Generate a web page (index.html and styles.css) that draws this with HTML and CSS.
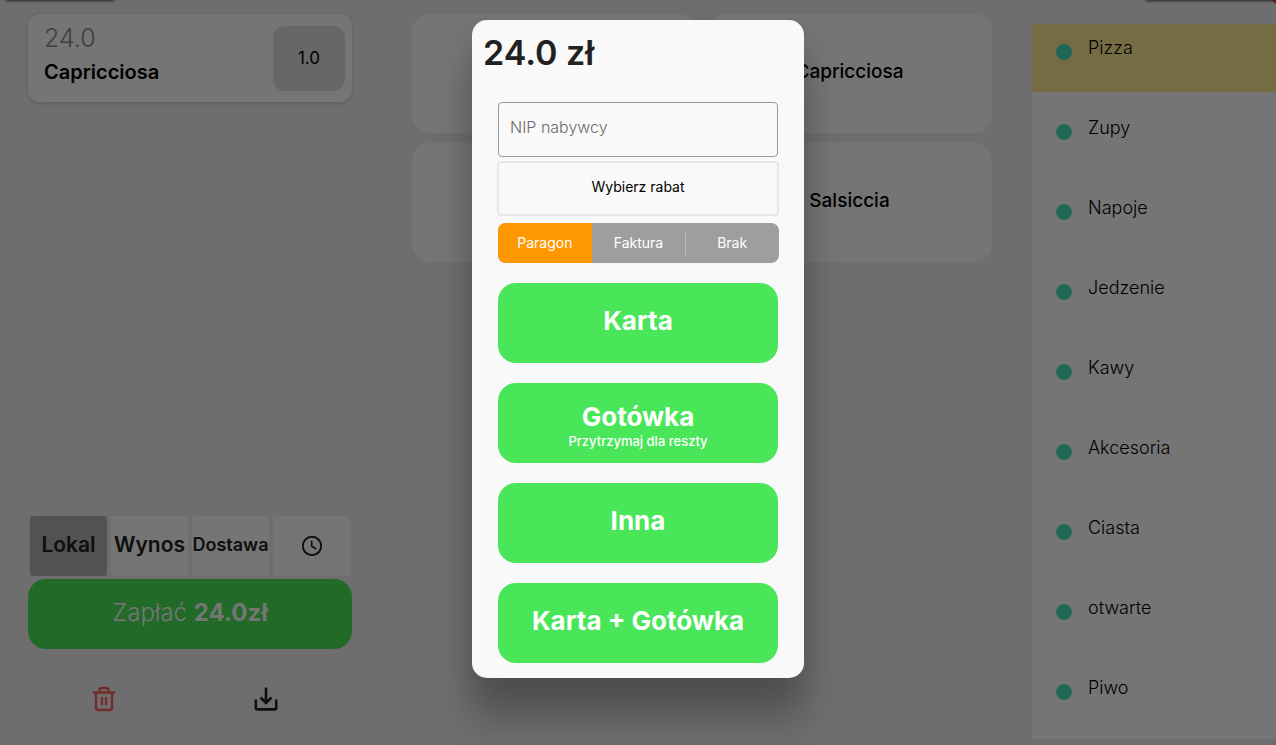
FILE: index.html
```html
<!DOCTYPE html>
<html lang="pl">
<head>
<meta charset="utf-8">
<title>Kasa</title>
<link rel="stylesheet" href="styles.css">
</head>
<body>
<div class="app">
  <section class="order">
    <article class="order-item">
      <div class="order-info">
        <span class="order-price">24.0</span>
        <span class="order-name">Capricciosa</span>
      </div>
      <button class="quantity" type="button">1.0</button>
    </article>
    <div class="order-actions">
      <div class="modes">
        <button class="mode mode-active" type="button">Lokal</button>
        <button class="mode" type="button">Wynos</button>
        <button class="mode mode-small" type="button">Dostawa</button>
        <button class="mode" type="button" aria-label="Czas">
          <svg width="22" height="22" viewBox="0 0 22 22" fill="none" stroke="currentColor" stroke-width="1.9"><circle cx="11" cy="11" r="9.2"/><path d="M10.7 5.8v5.500l4.600 2.800" stroke-width="1.6"/></svg>
        </button>
      </div>
      <button class="pay" type="button">Zapłać <strong>24.0zł</strong></button>
      <div class="tools">
        <button class="tool tool-delete" type="button" aria-label="Usuń">
          <svg width="24" height="26" viewBox="0 0 24 26" fill="none" stroke="currentColor" stroke-width="2.300"><path d="M1 6.500h22M4 6.500v15a2.500 2.500 0 0 0 2.500 2.500h11a2.500 2.500 0 0 0 2.500-2.500v-15M7.500 6V3.800a1.800 1.800 0 0 1 1.800-1.800h5.400a1.800 1.800 0 0 1 1.800 1.800V6M10 11v8M14 11v8"/></svg>
        </button>
        <button class="tool" type="button" aria-label="Zapisz">
          <svg width="24" height="24" viewBox="0 0 24 24" fill="none" stroke="currentColor" stroke-width="2.600"><path d="M1.800 12.500v8.300a1.600 1.600 0 0 0 1.600 1.600h17.200a1.600 1.600 0 0 0 1.600-1.600v-8.300M12 .5v15.500M6.500 10.500 12 15.900l5.500-5.400"/></svg>
        </button>
      </div>
    </div>
  </section>
  <main class="products">
    <button class="product" type="button"></button>
    <button class="product" type="button">Capricciosa</button>
    <button class="product" type="button"></button>
    <button class="product" type="button">Salsiccia</button>
  </main>
  <nav class="categories">
    <ul class="category-list">
      <li class="category category-active"><span class="dot"></span>Pizza</li>
      <li class="category"><span class="dot"></span>Zupy</li>
      <li class="category"><span class="dot"></span>Napoje</li>
      <li class="category"><span class="dot"></span>Jedzenie</li>
      <li class="category"><span class="dot"></span>Kawy</li>
      <li class="category"><span class="dot"></span>Akcesoria</li>
      <li class="category"><span class="dot"></span>Ciasta</li>
      <li class="category"><span class="dot"></span>otwarte</li>
      <li class="category"><span class="dot"></span>Piwo</li>
    </ul>
  </nav>
  <div class="edge edge-left"></div>
  <div class="edge edge-right"></div>
  <svg class="corner" width="4" height="4" viewBox="0 0 4 4"><path d="M0 0h4v4z" fill="#d32f2f"/></svg>
</div>
<div class="backdrop">
  <form class="dialog" role="dialog" aria-labelledby="total">
    <h1 class="total" id="total">24.0 zł</h1>
    <div class="dialog-body">
      <input class="tax-id" type="text" placeholder="NIP nabywcy" aria-label="NIP nabywcy">
      <button class="discount" type="button">Wybierz rabat</button>
      <div class="documents">
        <button class="document document-active" type="button">Paragon</button>
        <button class="document" type="button">Faktura</button>
        <button class="document document-split" type="button">Brak</button>
      </div>
      <div class="methods">
        <button class="method" type="button">Karta</button>
        <button class="method method-hinted" type="button">Gotówka<small class="hint">Przytrzymaj dla reszty</small></button>
        <button class="method" type="button">Inna</button>
        <button class="method" type="button">Karta + Gotówka</button>
      </div>
    </div>
  </form>
</div>
</body>
</html>
```
FILE: styles.css
```css
* { box-sizing: border-box; }
body {
  margin: 0;
  overflow: hidden;
  background: #f0f0f0;
  color: #000;
  font-family: Inter, "Noto Sans", sans-serif;
}
button, input { margin: 0; padding: 0; border: 0; font: inherit; color: inherit; }
svg { display: block; }

.app {
  position: relative;
  display: grid;
  grid-template-columns: 324px 1fr 244px;
  min-height: 100vh;
  padding-left: 28px;
}

.order {
  display: flex;
  flex-direction: column;
  justify-content: space-between;
  padding: 14px 0 6px;
}
.order-item {
  display: flex;
  align-items: center;
  justify-content: space-between;
  height: 88px;
  padding: 0 7px 0 16px;
  border-radius: 12px;
  background: #fff;
  box-shadow: 0 1px 4px rgba(0, 0, 0, .18);
}
.order-info { display: flex; flex-direction: column; gap: 2px; height: 72px; }
.order-price { font-size: 25px; line-height: 32px; font-weight: 300; color: #8c8c8c; }
.order-name { font-size: 20px; line-height: 32px; font-weight: 600; }
.quantity {
  width: 72px;
  height: 65px;
  border-radius: 12px;
  background: #e0e0e0;
  font-size: 17px;
}

.order-actions { display: flex; flex-direction: column; }
.modes { display: grid; grid-template-columns: repeat(4, 1fr); gap: 4px; padding: 0 2px 3px; }
.mode {
  display: flex;
  align-items: center;
  justify-content: center;
  height: 60px;
  padding-bottom: 4px;
  border-radius: 3px;
  background: #fff;
  color: #212121;
  font-size: 21px;
  font-weight: 600;
}
.mode:last-child { padding-bottom: 0; }
.mode-active { background: #b2b2b2; }
.mode-small { font-size: 18px; }
.pay {
  height: 70px;
  padding-bottom: 4px;
  border-radius: 18px;
  background: #48e658;
  color: #fff;
  font-size: 24px;
  font-weight: 300;
}
.pay strong { font-weight: 700; }
.tools { display: grid; grid-template-columns: 1fr 1fr; gap: 10px; padding: 10px 10px 0 0; }
.tool {
  display: flex;
  align-items: center;
  justify-content: center;
  height: 80px;
  border: 1px solid #e7e7e7;
  border-radius: 12px;
  background: transparent;
  color: #212121;
}
.tool-delete { color: #ff5c5c; }

.products {
  display: grid;
  grid-template-columns: 1fr 1fr;
  grid-auto-rows: 119px;
  align-content: start;
  gap: 10px;
  padding: 14px 40px 0 60px;
}
.product {
  padding-bottom: 4px;
  border-radius: 18px;
  background: #fff;
  font-size: 19px;
  font-weight: 500;
}

.categories { padding: 24px 0 6px; }
.category-list { height: 100%; margin: 0; padding: 0; background: #fff; list-style: none; }
.category {
  display: flex;
  align-items: flex-end;
  gap: 16px;
  height: 80px;
  padding: 0 24px 32px;
  font-size: 18px;
  line-height: 24px;
  font-weight: 300;
}
.category-active { height: 68px; background: #ffeb94; }
.dot { width: 16px; height: 16px; border-radius: 50%; background: #46e0c0; }

/* Lower edges of the scrolled toolbar */
.edge { position: absolute; top: -4px; height: 4px; box-shadow: 0 1px 3px rgba(0, 0, 0, .7); }
.edge-left { left: 6px; width: 108px; }
.edge-right { right: 0; width: 130px; }
.corner { position: absolute; top: 0; right: 0; }

.backdrop {
  position: absolute;
  inset: 0;
  display: flex;
  align-items: flex-start;
  justify-content: center;
  padding-top: 20px;
  overflow: hidden;
  background: rgba(0, 0, 0, .54);
}
.dialog {
  width: 332px;
  border-radius: 15px;
  background: #f9f9f9;
  box-shadow: 0 40px 36px rgba(0, 0, 0, .25), 0 8px 28px rgba(0, 0, 0, .08);
}
.total {
  margin: 0;
  padding: 8px 11px 24px;
  color: #212121;
  font-size: 34px;
  line-height: 50px;
  font-weight: 600;
}
.dialog-body { display: flex; flex-direction: column; padding: 0 25px 15px; }
.tax-id {
  height: 55px;
  margin: 0 1px 4px;
  padding: 0 11px 6px;
  border: 1px solid #999;
  border-radius: 4px;
  background: transparent;
  font-size: 16px;
  font-weight: 300;
}
.tax-id::placeholder { color: #6b6b6b; opacity: 1; }
.discount {
  height: 55px;
  padding-bottom: 4px;
  border: 2px solid #e8e8e8;
  border-radius: 4px;
  background: transparent;
  font-size: 14px;
}
.documents {
  display: grid;
  grid-template-columns: repeat(3, 1fr);
  height: 40px;
  margin: 7px 0 20px 1px;
  overflow: hidden;
  border-radius: 8px;
  background: #9e9e9e;
  color: #fff;
  font-size: 14px;
}
.document { padding-bottom: 2px; background: transparent; }
.document-active { background: #ff9800; }
.document-split {
  background: linear-gradient(#bdbdbd, #bdbdbd) left center / 1px 24px no-repeat;
}
.methods { display: flex; flex-direction: column; gap: 20px; padding: 0 1px; }
.method {
  display: flex;
  flex-direction: column;
  align-items: center;
  justify-content: center;
  height: 80px;
  padding-bottom: 4px;
  border-radius: 18px;
  background: #48e658;
  color: #fff;
  font-size: 26px;
  line-height: 32px;
  font-weight: 700;
}
.method-hinted { padding: 4px 0 0; }
.hint { font-size: 13px; line-height: 16px; font-weight: 500; }
```
